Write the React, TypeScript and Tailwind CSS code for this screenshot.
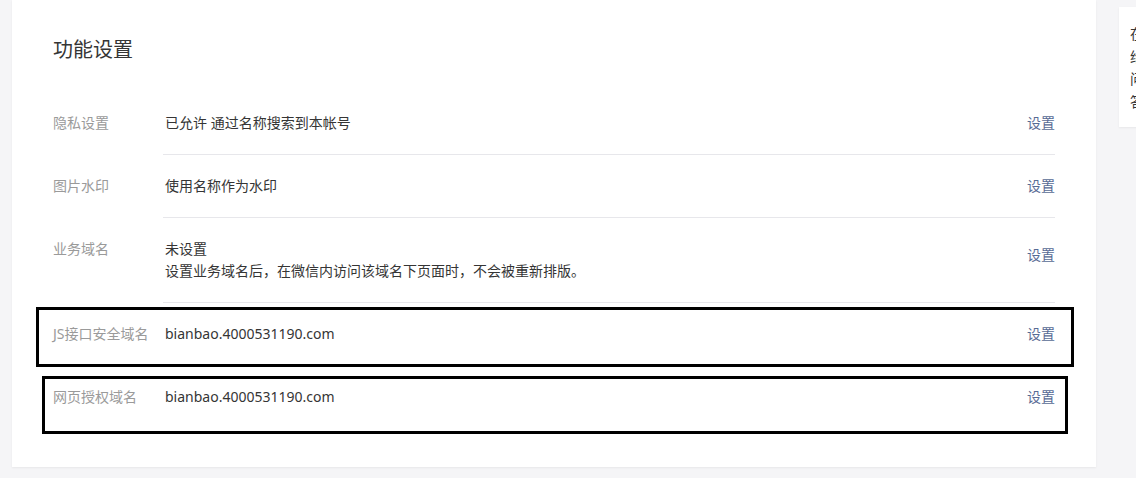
import React from "react";

const FONT = '"Noto Sans", "Noto Sans CJK SC", sans-serif';

type Row = {
  label: string;
  value: React.ReactNode;
  linkClass?: string;
};

const rows: Row[] = [
  { label: "隐私设置", value: "已允许 通过名称搜索到本帐号" },
  { label: "图片水印", value: "使用名称作为水印" },
  {
    label: "业务域名",
    value: (
      <>
        <div>未设置</div>
        <div>设置业务域名后，在微信内访问该域名下页面时，不会被重新排版。</div>
      </>
    ),
    linkClass: "self-start mt-[6px]",
  },
  { label: "JS接口安全域名", value: "bianbao.4000531190.com" },
  { label: "网页授权域名", value: "bianbao.4000531190.com" },
];

export default function App() {
  return (
    <div
      className="relative w-[1136px] h-[478px] bg-[#f5f5f7] overflow-hidden flex items-start"
      style={{ fontFamily: FONT }}
    >
      <div className="ml-[12px] w-[1084px] h-[467px] shrink-0 bg-white shadow-[0_1px_2px_rgba(0,0,0,0.06)] pl-[41px] pr-[41px] pt-[36px]">
        <h2 className="text-[20px] leading-[28px] text-[#353535] mb-[28px]">功能设置</h2>
        {rows.map((r, i) => (
          <div key={i} className="flex text-[14px] leading-[22px]">
            <div className="w-[110px] shrink-0 pt-[20px] text-[#9a9a9a] whitespace-nowrap">{r.label}</div>
            <div
              className={
                "flex-1 flex justify-between items-center py-[20px] " +
                (i < rows.length - 1 ? "border-b border-[#e7e7eb]" : "")
              }
            >
              <div className="pl-[2px] text-[#353535]">{r.value}</div>
              <a className={"text-[#576b95] " + (r.linkClass ?? "")}>设置</a>
            </div>
          </div>
        ))}
      </div>
      <div className="ml-[23px] mt-[7px] w-[200px] h-[120px] shrink-0 bg-white shadow-[0_1px_2px_rgba(0,0,0,0.06)] pl-[11px] pt-[16px] text-[14px] leading-[22.5px] text-[#353535]">
        <div className="whitespace-nowrap">在线客服</div>
        <div className="whitespace-nowrap">给我们留言</div>
        <div className="whitespace-nowrap">问题反馈</div>
        <div className="whitespace-nowrap">答疑中心</div>
      </div>

      <div className="absolute left-[36px] top-[307px] w-[1038px] h-[60px] border-[3px] border-black pointer-events-none" />
      <div className="absolute left-[42px] top-[376px] w-[1026px] h-[58px] border-[3px] border-black pointer-events-none" />
    </div>
  );
}
